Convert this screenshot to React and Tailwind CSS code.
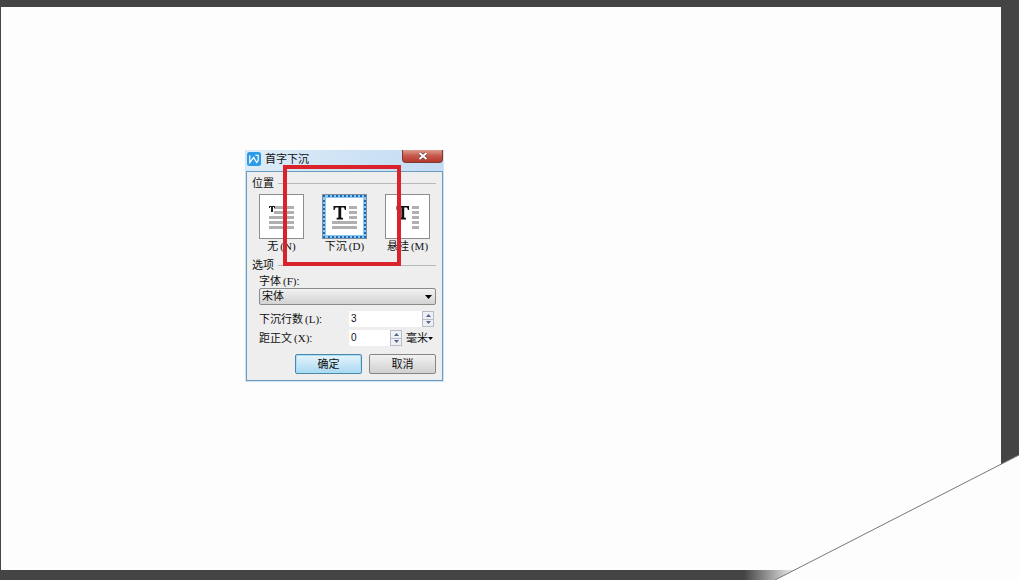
import React, { useState } from 'react';

const positions = [
  { id: 'none', label: '无', hotkey: 'N' },
  { id: 'dropped', label: '下沉', hotkey: 'D' },
  { id: 'margin', label: '悬挂', hotkey: 'M' },
];

const fonts = ['宋体', '黑体', '楷体'];

const WpsLogo = () => (
  <svg viewBox="0 0 14 14" className="h-3.5 w-3.5 shrink-0" aria-hidden="true">
    <rect width="14" height="14" rx="2.5" fill="#2b9be8" />
    <path d="M2.8 3.2 V10.6 L6.6 5.4 L9.6 10.4 L11.2 8.6 V3.4 H8.4" fill="none" stroke="#fff" strokeWidth="1.2" />
  </svg>
);

const PositionIcon = ({ type }) => {
  if (type === 'none') {
    return (
      <svg viewBox="0 0 43 43" className="h-full w-full" aria-hidden="true">
        <g fill="#b0b0b0">
          <rect x="14" y="11" width="20" height="3" />
          <rect x="14" y="16" width="20" height="3" />
          <rect x="9" y="21" width="25" height="3" />
          <rect x="9" y="26" width="25" height="3" />
          <rect x="9" y="31" width="25" height="3" />
        </g>
        <path d="M9 11 h6 v2 h-1 v-1 h-1 v5 h-2 v-5 h-1 v1 h-1 z" fill="#222" />
      </svg>
    );
  }
  if (type === 'dropped') {
    return (
      <svg viewBox="0 0 43 43" className="h-full w-full" aria-hidden="true">
        <g fill="#b0b0b0">
          <rect x="26" y="11" width="8" height="3" />
          <rect x="26" y="16" width="8" height="3" />
          <rect x="26" y="21" width="8" height="3" />
          <rect x="9" y="26" width="25" height="3" />
          <rect x="9" y="31" width="25" height="3" />
        </g>
        <path d="M10.5 11 H23 V15 H22 L21 12.5 H18.2 V22.6 L20 23 V24.5 H13.6 V23 L15.4 22.6 V12.5 H12.6 L11.6 15 H10.5 Z" fill="#111" />
      </svg>
    );
  }
  return (
    <svg viewBox="0 0 43 43" className="h-full w-full" aria-hidden="true">
      <g fill="#b0b0b0">
        <rect x="26" y="11" width="7" height="3" />
        <rect x="26" y="16" width="7" height="3" />
        <rect x="26" y="21" width="7" height="3" />
        <rect x="26" y="26" width="7" height="3" />
        <rect x="26" y="31" width="7" height="3" />
      </g>
      <path d="M10.5 11 H23 V15 H22 L21 12.5 H18.2 V22.6 L20 23 V24.5 H13.6 V23 L15.4 22.6 V12.5 H12.6 L11.6 15 H10.5 Z" fill="#111" />
    </svg>
  );
};

const Hotkey = ({ children }) => (
  <span className="ml-0.5 font-['Liberation_Serif',serif]">({children})</span>
);

const GroupTitle = ({ children }) => (
  <div className="flex h-[22px] items-center gap-1">
    <h2>{children}</h2>
    <div className="h-px flex-1 bg-[#b9b9b9]" />
  </div>
);

const Stepper = ({ id, value, onChange, className }) => (
  <div className={`flex h-4 bg-white ${className}`}>
    <input
      id={id}
      type="text"
      value={value}
      onChange={(e) => onChange(Number(e.target.value) || 0)}
      className="w-0 flex-1 pl-0.5 text-[10px] outline-none"
    />
    <div className="flex w-3 flex-col border border-[#b4bdc8] bg-[#eef0f3]">
      <button aria-label="增加" onClick={() => onChange(value + 1)} className="flex flex-1 items-center justify-center border-b border-[#b4bdc8]">
        <svg viewBox="0 0 5 3" className="h-[3px] w-[5px]"><path d="M0 3 L2.5 0 L5 3 Z" fill="#52658c" /></svg>
      </button>
      <button aria-label="减少" onClick={() => onChange(Math.max(0, value - 1))} className="flex flex-1 items-center justify-center">
        <svg viewBox="0 0 5 3" className="h-[3px] w-[5px]"><path d="M0 0 L2.5 3 L5 0 Z" fill="#52658c" /></svg>
      </button>
    </div>
  </div>
);

const DropCapDialog = () => {
  const [position, setPosition] = useState('dropped');
  const [font, setFont] = useState('宋体');
  const [lines, setLines] = useState(3);
  const [distance, setDistance] = useState(0);

  return (
    <div role="dialog" aria-labelledby="dialog-title" className="relative w-[199px] bg-[#cfe3f4] px-px pb-px">
      {/* Title bar */}
      <div className="flex h-[21px] items-start bg-linear-to-r from-[#dcebf7] to-[#c3dcf3]">
        <div className="flex flex-1 items-center gap-1 pt-px pl-px">
          <WpsLogo />
          <h1 id="dialog-title">首字下沉</h1>
        </div>
        <button
          aria-label="关闭"
          className="flex h-[13px] w-[41px] items-center justify-center rounded-b-sm border border-t-0 border-[#7d3a34] bg-linear-to-b from-[#dc9a8c] via-[#c6574a] to-[#b5382b]"
        >
          <svg viewBox="0 0 10 8" className="h-2 w-2.5">
            <path d="M1.5 1 L8.5 7 M8.5 1 L1.5 7" stroke="#6b3a3a" strokeWidth="3.2" />
            <path d="M1.5 1 L8.5 7 M8.5 1 L1.5 7" stroke="#fff" strokeWidth="2" />
          </svg>
        </button>
      </div>

      <div className="border border-[#6c9cbd] bg-[#eeeeee] pr-1.5 pb-1.5 pl-[5px]">
        <GroupTitle>位置</GroupTitle>
        <div className="flex gap-[18px] pl-[7px]">
          {positions.map((item) => (
            <label key={item.id} className="flex w-[45px] flex-col items-center">
              <input
                type="radio"
                name="position"
                className="sr-only"
                checked={position === item.id}
                onChange={() => setPosition(item.id)}
              />
              <span className={`block h-[45px] w-[45px] border bg-white ${position === item.id ? 'border-[#7d8d99] shadow-[inset_0_0_0_3px_#8cc8f2] outline-2 -outline-offset-3 outline-dotted outline-[#1669b8]' : 'border-[#8d8d8d]'}`}>
                <PositionIcon type={item.id} />
              </span>
              <span className="h-[15px] leading-[14px] whitespace-nowrap">
                {item.label}
                <Hotkey>{item.hotkey}</Hotkey>
              </span>
            </label>
          ))}
        </div>

        <GroupTitle>选项</GroupTitle>
        <div className="pl-[7px]">
          <label htmlFor="font" className="block h-3 leading-[10px]">字体<Hotkey>F</Hotkey>:</label>
          <div className="grid">
            <select
              id="font"
              value={font}
              onChange={(e) => setFont(e.target.value)}
              className="col-start-1 row-start-1 h-[17px] appearance-none rounded-xs border border-[#8a8a8a] bg-linear-to-b from-[#f2f2f2] to-[#d3d3d3] pl-0.5 leading-[15px]"
            >
              {fonts.map((name) => (
                <option key={name}>{name}</option>
              ))}
            </select>
            <svg viewBox="0 0 7 4" className="pointer-events-none col-start-1 row-start-1 mr-1 h-1 w-[7px] self-center justify-self-end">
              <path d="M0 0 H7 L3.5 4 Z" fill="#000" />
            </svg>
          </div>

          <div className="mt-1.5 flex h-4 items-center">
            <label htmlFor="lines" className="w-[90px] whitespace-nowrap">下沉行数<Hotkey>L</Hotkey>:</label>
            <Stepper id="lines" value={lines} onChange={setLines} className="w-[85px]" />
          </div>
          <div className="mt-[3px] flex h-4 items-center">
            <label htmlFor="distance" className="w-[90px] whitespace-nowrap">距正文<Hotkey>X</Hotkey>:</label>
            <Stepper id="distance" value={distance} onChange={setDistance} className="w-[53px]" />
            <button className="ml-1 flex items-center whitespace-nowrap">
              毫米
              <svg viewBox="0 0 5 3" className="h-[3px] w-[5px]"><path d="M0 0 H5 L2.5 3 Z" fill="#000" /></svg>
            </button>
          </div>
        </div>

        <div className="mt-2 flex justify-end gap-[7px]">
          <button className="h-5 w-[67px] rounded-xs border border-[#4c87a8] bg-linear-to-b from-[#e6f4fb] to-[#a9d8f1] leading-[18px] shadow-[inset_0_0_0_1px_#a5e0f7]">
            确定
          </button>
          <button className="h-5 w-[67px] rounded-xs border border-[#858585] bg-linear-to-b from-[#f2f2f2] to-[#d0d0d0] leading-[18px]">
            取消
          </button>
        </div>
      </div>

      {/* Highlight over the position options */}
      <div className="pointer-events-none absolute top-[15px] left-[38px] h-[101px] w-[118px] border-4 border-[#d9222c]" />
    </div>
  );
};

export default function App() {
  return (
    <div className="relative flex min-h-screen flex-col bg-[#444444] pt-[7px] font-['Liberation_Sans','Noto_Sans_CJK_SC',sans-serif] text-[11px] leading-4 text-[#111]">
      <main className="mr-[18px] ml-px flex-1 bg-[#fdfdfd] pt-[143px] pl-[244px]">
        <DropCapDialog />
      </main>
      <div className="h-2.5 bg-[linear-gradient(to_left,#dddddd_230px,#444444_275px)]" />

      {/* Folded page corner */}
      <svg viewBox="0 0 244 125" className="absolute right-0 bottom-0 h-[125px] w-[244px]" aria-hidden="true">
        <path d="M244 0 V125 H0 Z" fill="#fdfdfd" />
        <path d="M0 125 L244 0" stroke="#777777" strokeWidth="1" />
      </svg>
    </div>
  );
}
